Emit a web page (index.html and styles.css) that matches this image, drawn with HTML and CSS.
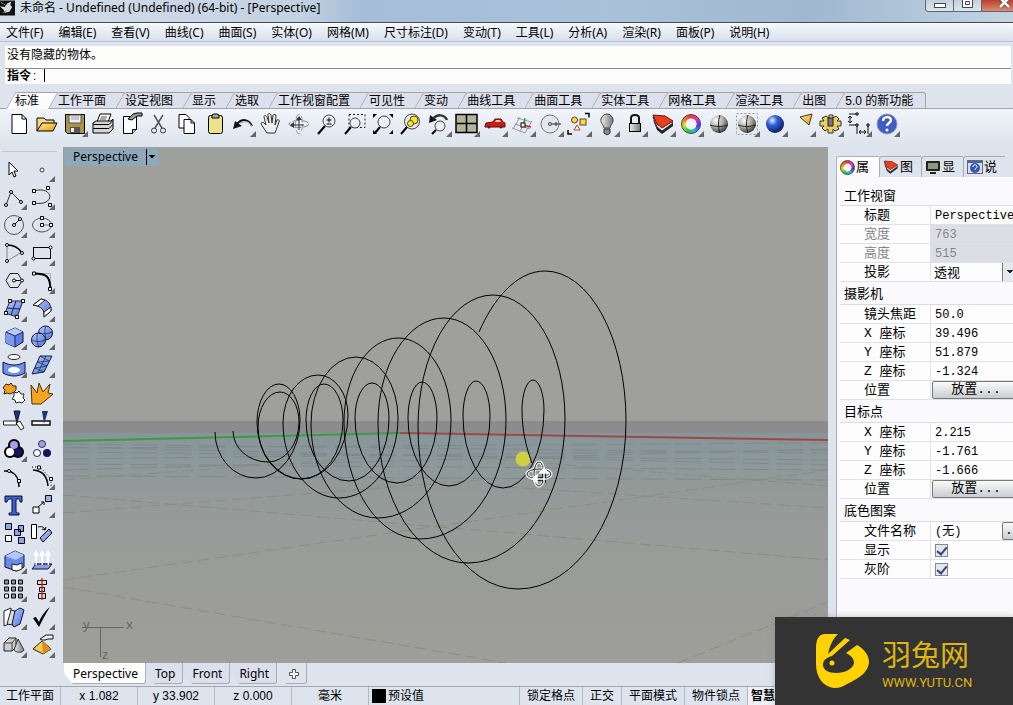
FILE: index.html
```html
<!DOCTYPE html>
<html lang="zh-CN">
<head>
<meta charset="UTF-8" />
<meta name="viewport" content="width=device-width, initial-scale=1" />
<title>未命名 - Undefined (Undefined) (64-bit) - [Perspective]</title>
<link rel="stylesheet" href="styles.css">
</head>
<body>

<svg class="defs" aria-hidden="true">
  <defs>
    <radialGradient id="ballGray" cx=".35" cy=".3" r=".8"><stop offset="0" stop-color="#fff"/><stop offset=".5" stop-color="#a8a89c"/><stop offset="1" stop-color="#222"/></radialGradient>
    <radialGradient id="ballBlue" cx=".35" cy=".3" r=".8"><stop offset="0" stop-color="#eef"/><stop offset=".35" stop-color="#2d62d8"/><stop offset="1" stop-color="#04104a"/></radialGradient>
    <linearGradient id="blue" x1="0" y1="0" x2="1" y2="1"><stop offset="0" stop-color="#b9ccff"/><stop offset="1" stop-color="#4d6fd6"/></linearGradient>
    <linearGradient id="gold" x1="0" y1="0" x2="1" y2="1"><stop offset="0" stop-color="#fff0a0"/><stop offset="1" stop-color="#e8980c"/></linearGradient>
    <linearGradient id="gray" x1="0" y1="0" x2="1" y2="0"><stop offset="0" stop-color="#eee"/><stop offset="1" stop-color="#777"/></linearGradient>
    <linearGradient id="ground" x1="0" y1="0" x2="0" y2="1">
      <stop offset="0" stop-color="#869699"/><stop offset=".15" stop-color="#8e9999"/><stop offset=".4" stop-color="#989b99"/><stop offset="1" stop-color="#9e9e9a"/>
    </linearGradient>
  </defs>
</svg>

<header class="titlebar">
  <svg class="app-icon" viewBox="0 0 16 16"><rect width="16" height="16" fill="#111"/><path d="M0 6l5 1 3-4 4-2-1 4 2 2-3 5-5 1-1-3z" fill="#ddd"/><path d="M1 2l5 3M3 13l4-2" stroke="#888"/></svg>
  <h1>未命名 - Undefined (Undefined) (64-bit) - [Perspective]</h1>
  <div class="win-buttons">
    <button aria-label="最小化"><svg viewBox="0 0 12 12"><rect x=".5" y="3.500" width="11" height="4" fill="#fff" stroke="#445"/></svg></button>
    <button aria-label="还原"><svg viewBox="0 0 12 12"><path d="M.5-1.500h10v9h-10zM3.500 1.500h4v3h-4z" fill="#fff" stroke="#445"/></svg></button>
    <button class="close" aria-label="关闭"><svg viewBox="0 0 12 12"><path d="M1-2l9 9M10-2l-9 9" stroke="#544" stroke-width="4"/><path d="M1-2l9 9M10-2l-9 9" stroke="#fff" stroke-width="2.500"/></svg></button>
  </div>
</header>

<nav class="menu">
  <button>文件(F)</button><button>编辑(E)</button><button>查看(V)</button><button>曲线(C)</button><button>曲面(S)</button><button>实体(O)</button><button>网格(M)</button><button>尺寸标注(D)</button><button>变动(T)</button><button>工具(L)</button><button>分析(A)</button><button>渲染(R)</button><button>面板(P)</button><button>说明(H)</button>
</nav>

<section class="command">
  <p>没有隐藏的物体。</p>
  <div class="prompt"><label for="cmd">指令</label><span>:</span><input id="cmd" type="text"></div>
</section>

<nav class="tool-tabs">
  <button class="active">标准</button><button>工作平面</button><button>设定视图</button><button>显示</button><button>选取</button><button>工作视窗配置</button><button>可见性</button><button>变动</button><button>曲线工具</button><button>曲面工具</button><button>实体工具</button><button>网格工具</button><button>渲染工具</button><button>出图</button><button>5.0 的新功能</button>
</nav>

<div class="toolbar">
  <button aria-label="新建"><svg viewBox="0 0 24 24"><path d="M5 2.500h10l4.500 4.500v14.500H5z" fill="#fff" stroke="#000"/><path d="M15 2.500V7h4.500" fill="none" stroke="#000"/></svg></button>
  <button aria-label="打开"><svg viewBox="0 0 24 24"><path d="M2 19V6h7l2 2h8v4" fill="#f3d98a" stroke="#000"/><path d="M2 19l5-8h15l-4 8z" fill="url(#gold)" stroke="#000"/></svg></button>
  <button class="more" aria-label="保存"><svg viewBox="0 0 24 24"><path d="M2.500 2.500h19v19h-17l-2-2z" fill="#aa9642" stroke="#000"/><path d="M6 3h12v8H6z" fill="#eef" stroke="#554"/><path d="M8 5h8M8 7h8" stroke="#99a"/><path d="M7 15h10v6H7z" fill="#555"/><path d="M8 16h3v4H8z" fill="#eee"/></svg></button>
  <button aria-label="打印"><svg viewBox="0 0 24 24"><path d="M6 10l3-8h11l-3 8" fill="#fff" stroke="#000"/><path d="M10 5h6M9 7h6" stroke="#555"/><path d="M2 11l3-2h15l2-2v10l-4 4H2z" fill="#d4d4d4" stroke="#000"/><path d="M2 12.500h16l4-4M2 16.500h16l4-4" fill="none" stroke="#000"/></svg></button>
  <button aria-label="文件属性"><svg viewBox="0 0 24 24"><path d="M4.500 4.500h13v13l-4 4h-9z" fill="#fff" stroke="#000"/><path d="M13.500 21.500v-4h4" fill="#ccc" stroke="#000"/><path d="M9 7l5-5 4-1h5v3h-5l-5 4z" fill="#999" stroke="#000"/></svg></button>
  <button aria-label="剪切"><svg viewBox="0 0 24 24"><path d="M7 3l8 13M16 3L8 16" stroke="#555" stroke-width="1.500"/><circle cx="7" cy="18.500" r="2.500" fill="none" stroke="#333"/><circle cx="16" cy="18.500" r="2.500" fill="none" stroke="#333"/></svg></button>
  <button aria-label="复制"><svg viewBox="0 0 24 24"><path d="M4 2.500h7l3 3V16H4z" fill="#fff" stroke="#000"/><path d="M9 7.500h7l3.500 3.500v10.500H9z" fill="#fff" stroke="#000"/><path d="M16 7.500V11h3.500" fill="none" stroke="#000"/></svg></button>
  <button aria-label="粘贴"><svg viewBox="0 0 24 24"><rect x="5.500" y="3.500" width="14" height="18" rx="2" fill="#ece28a" stroke="#000"/><path d="M9 6V3l2-1h3l2 1v3z" fill="#aaa" stroke="#000"/></svg></button>
  <button class="more" aria-label="撤销"><svg viewBox="0 0 24 24"><path d="M2 17l2-8 7 5z" fill="#111"/><path d="M6 12c5-6 12-5 15 2" fill="none" stroke="#111" stroke-width="2"/><path d="M9 11c5-2 8-2 12 3" fill="none" stroke="#999"/></svg></button>
  <button aria-label="平移"><svg viewBox="0 0 24 24"><path d="M8 21l-6-9c0-2 2-2 3-1l2 2-2-8c0-2 2-2 3 0l2 6-1-8c0-2 2-2 3 0l1 8 1-8c1-1 3-1 3 1l-1 9 2-5c1-1 3 0 2 2l-4 11z" fill="#eee" stroke="#333"/></svg></button>
  <button aria-label="旋转视图"><svg viewBox="0 0 24 24"><ellipse cx="12" cy="12" rx="10" ry="3.500" fill="none" stroke="#888" stroke-dasharray="7 2"/><ellipse cx="12" cy="12" rx="3.500" ry="10" fill="none" stroke="#999" stroke-dasharray="7 2"/><path d="M5 13h12M12 6v12" fill="none" stroke="#333"/><path d="M7 10v6l-4-3zM9 8h6l-3-4z" fill="#333"/></svg></button>
  <button aria-label="动态缩放"><svg viewBox="0 0 24 24"><circle cx="14" cy="9" r="6" fill="#eef" stroke="#444"/><path d="M10 14l-7 8" stroke="#000" stroke-width="2"/><path d="M11.500 8h5M14 5.500v5M11.500 12h5" stroke="#000"/></svg></button>
  <button aria-label="框选缩放"><svg viewBox="0 0 24 24"><rect x="6" y="2.500" width="16" height="13" fill="none" stroke="#222" stroke-dasharray="2 2"/><circle cx="12" cy="11" r="5" fill="#eef" stroke="#444"/><path d="M8 15l-6 7" stroke="#000" stroke-width="2"/></svg></button>
  <button aria-label="缩放至最大范围"><svg viewBox="0 0 24 24"><path d="M2 6V2h4zM18 2h4v4zM22 18v4h-4zM2 18v4h4z" fill="#000"/><circle cx="13" cy="10" r="6" fill="#eef" stroke="#444"/><path d="M9 15l-5 6" stroke="#000" stroke-width="2"/></svg></button>
  <button aria-label="缩放选取物体"><svg viewBox="0 0 24 24"><circle cx="13" cy="9.500" r="7.500" fill="#e9e9ee" stroke="#444"/><circle cx="15" cy="8" r="4" fill="#ffe629" stroke="#443"/><circle cx="11.500" cy="11.500" r="3" fill="#ffe629" stroke="#443"/><path d="M8 15l-6 7" stroke="#000" stroke-width="2"/></svg></button>
  <button class="more" aria-label="恢复视图"><svg viewBox="0 0 24 24"><path d="M2 11l1-8 7 5z" fill="#111"/><path d="M6 7c4-5 11-5 14 1" fill="none" stroke="#333" stroke-width="2.500"/><circle cx="13" cy="14" r="5" fill="#eee" stroke="#444"/><path d="M9 18l-4 4" stroke="#000" stroke-width="2"/></svg></button>
  <button class="more" aria-label="四视图"><svg viewBox="0 0 24 24"><rect x="1" y="2.500" width="21" height="18" fill="#b5b398" stroke="#000" stroke-width="1.500"/><path d="M11.500 2v19M1 11.500h21" stroke="#000" stroke-width="1.500"/></svg></button>
  <button class="more" aria-label="右视图"><svg viewBox="0 0 24 24"><path d="M2 14l1-3 7-1 2-3h6l2 3 2 1v4H2z" fill="#d01c10" stroke="#700"/><path d="M13 8h4l1 2h-6z" fill="#ecc"/><circle cx="6" cy="15" r="1.500" fill="#333"/><circle cx="18" cy="15" r="1.500" fill="#333"/></svg></button>
  <button class="more" aria-label="工作平面"><svg viewBox="0 0 24 24"><path d="M6 6l14 4M4 12l15 5M1 16l13 5M9 5L2 17M15 7L9 20M21 9l-7 12" stroke="#888" stroke-width=".8"/><path d="M12 13l8 2" stroke="#c22" stroke-width="1.500"/><path d="M12 13l2-7" stroke="#282"/><rect x="10" y="11" width="4" height="4" fill="#fff" stroke="#000"/></svg></button>
  <button class="more" aria-label="圆"><svg viewBox="0 0 24 24"><circle cx="11" cy="12" r="9" fill="#e3e6ea" stroke="#777"/><circle cx="11" cy="12" r="1.500" fill="#fff" stroke="#333"/><path d="M13 12h9M17 10v4" stroke="#222"/></svg></button>
  <button class="more" aria-label="选取"><svg viewBox="0 0 24 24"><path d="M18 1.500h4v4M1 18v4h4" fill="none" stroke="#000" stroke-width="1.500"/><circle cx="7.500" cy="8" r="3" fill="#ffd83b" stroke="#543"/><rect x="13" y="7" width="6" height="6" fill="#ffd83b" stroke="#543"/><path d="M10 13l3 5H7z" fill="#fff" stroke="#b42"/></svg></button>
  <button class="more" aria-label="隐藏物体"><svg viewBox="0 0 24 24"><path d="M9 16c0-3-4-5-3-9 1-3 3-5 6-5s5 2 6 5c1 4-3 6-3 9z" fill="url(#gray)" stroke="#444"/><path d="M9 17h6v4l-3 2-3-2z" fill="#888" stroke="#333"/></svg></button>
  <button class="more" aria-label="锁定物体"><svg viewBox="0 0 24 24"><path d="M8 12V6c0-4 8-4 8 0v6" fill="none" stroke="#111" stroke-width="2"/><rect x="6.500" y="11.500" width="11" height="8" fill="url(#gray)" stroke="#000"/></svg></button>
  <button class="more" aria-label="图层"><svg viewBox="0 0 24 24"><path d="M2 8l4 10 5 4 11-8v-4l-11 6z" fill="#222"/><path d="M2 5l4 10 5 4 11-8-3-2z" fill="#eee" stroke="#333"/><path d="M2 3l12 1 8 5-11 7-5-4z" fill="#e8411a" stroke="#612"/></svg></button>
  <button class="more" aria-label="物件属性"><span class="wheel"></span></button>
  <button aria-label="着色"><svg viewBox="0 0 24 24"><circle cx="12" cy="12" r="9" fill="url(#ballGray)"/><path d="M3 13c6 2 12 2 18 0M13 3c-2 6-2 12 0 18" fill="none" stroke="#222"/></svg></button>
  <button class="more" aria-label="渲染模式"><svg viewBox="0 0 24 24"><rect x="1.500" y="1.500" width="21" height="21" fill="none" stroke="#999" stroke-dasharray="2 2"/><circle cx="12" cy="12" r="9" fill="url(#ballGray)"/><path d="M3 13c6 2 12 2 18 0M13 3c-2 6-2 12 0 18" fill="none" stroke="#222"/></svg></button>
  <button class="more" aria-label="渲染"><svg viewBox="0 0 24 24"><circle cx="12" cy="12" r="9" fill="url(#ballBlue)"/></svg></button>
  <button class="more" aria-label="灯光"><svg viewBox="0 0 24 24"><path d="M9 5l12-3-3 11z" fill="url(#gold)" stroke="#432"/></svg></button>
  <button class="more" aria-label="选项"><svg viewBox="0 0 24 24"><path d="M10 3h4v3l3-2 3 3-2 2h4v5h-4l2 3-4 2-2-2v4H9v-4l-3 2-3-3 2-2H1V9h4L3 6l4-2 3 2z" fill="#ecce65" stroke="#332"/><rect x="9" y="6" width="5" height="8" fill="#777" stroke="#222"/></svg></button>
  <button class="more" aria-label="尺寸标注"><svg viewBox="0 0 24 24"><path d="M2 2h8M3 4v7M2 13h8M1 6l2-2 2 2M1 9l2 2 2-2M10 14v8M21 14v8M12 20h7M14 18l-2 2 2 2M17 18l2 2-2 2" fill="none" stroke="#111"/><path d="M9 1h2v2H9zM9 12h2v2H9zM20 12h2v2h-2z" fill="#fff" stroke="#000"/></svg></button>
  <button class="more" aria-label="说明"><svg viewBox="0 0 24 24"><circle cx="12" cy="12" r="10" fill="#3d5fc4" stroke="#99b"/><path d="M8 9c0-5 8-5 8-1 0 3-4 3-4 6" fill="none" stroke="#fff" stroke-width="2.500"/><circle cx="12" cy="18" r="1.500" fill="#fff"/></svg></button>
</div>

<main>
  <aside class="tools">
    <button aria-label="选取"><svg viewBox="0 0 24 24"><path d="M7 5v13l3-3 2 5 2-1-2-5h4z" fill="#fff" stroke="#000"/></svg></button>
    <button class="more" aria-label="点"><svg viewBox="0 0 24 24"><circle cx="12" cy="13" r="2" fill="#fff" stroke="#243"/></svg></button>
    <button class="more" aria-label="多重直线"><svg viewBox="0 0 24 24"><path d="M4 20L9 7l10 10" fill="none" stroke="#333"/><g fill="#fff" stroke="#000"><circle cx="4" cy="20" r="1.500"/><circle cx="9" cy="7" r="1.500"/><circle cx="19" cy="17" r="1.500"/></g></svg></button>
    <button class="more" aria-label="控制点曲线"><svg viewBox="0 0 24 24"><path d="M4 6c20-6 22 16 0 12" fill="none" stroke="#333"/><g fill="#fff" stroke="#000"><path d="M2.500 4.500h3v3h-3zM16.500 1.500h3v3h-3zM2.500 16.500h3v3h-3zM18.500 18.500h3v3h-3z"/></g></svg></button>
    <button class="more" aria-label="圆"><svg viewBox="0 0 24 24"><circle cx="12" cy="12" r="9.500" fill="none" stroke="#555"/><path d="M12 12l6-6" stroke="#000"/><circle cx="12" cy="12" r="1.500" fill="#fff" stroke="#000"/><circle cx="18" cy="6" r="1.500" fill="#fff" stroke="#000"/></svg></button>
    <button class="more" aria-label="椭圆"><svg viewBox="0 0 24 24"><ellipse cx="12" cy="12" rx="9.500" ry="7" fill="none" stroke="#555"/><path d="M12 12h9" stroke="#777"/><path d="M10.500 10.500h3v3h-3zM10.500 3.500h3v3h-3zM19.500 10.500h3v3h-3z" fill="#fff" stroke="#000"/></svg></button>
    <button class="more" aria-label="圆弧"><svg viewBox="0 0 24 24"><path d="M5 20V4M5 20l15-9" stroke="#888"/><path d="M5 4c8 0 12 3 15 8" fill="none" stroke="#000" stroke-width="1.500"/><g fill="#fff" stroke="#000"><circle cx="5" cy="4" r="1.500"/><circle cx="5" cy="20" r="1.500"/><circle cx="20" cy="12" r="1.500"/></g></svg></button>
    <button class="more" aria-label="矩形"><svg viewBox="0 0 24 24"><rect x="3.500" y="6.500" width="17" height="11" fill="none" stroke="#000"/><circle cx="3.500" cy="17.500" r="1.500" fill="#fff" stroke="#000"/><circle cx="20.500" cy="6.500" r="1.500" fill="#fff" stroke="#000"/></svg></button>
    <button class="more" aria-label="多边形"><svg viewBox="0 0 24 24"><path d="M4 11.500l4-7h8l4 7-4 7H8z" fill="none" stroke="#222"/><path d="M12 11.500h8" stroke="#000"/><circle cx="12" cy="11.500" r="1.500" fill="#fff" stroke="#000"/><circle cx="20" cy="11.500" r="1.500" fill="#fff" stroke="#000"/></svg></button>
    <button class="more" aria-label="曲线圆角"><svg viewBox="0 0 24 24"><path d="M4 4.500h16.500V20" fill="none" stroke="#9b9"/><path d="M4 4.500c12 0 16 2 16.500 16" fill="none" stroke="#000" stroke-width="2"/><path d="M2.500 3h3v3h-3zM18.500 18.500h3v3h-3z" fill="#fff" stroke="#000"/></svg></button>
    <button class="more" aria-label="曲面"><svg viewBox="0 0 24 24"><path d="M8 4h13l-6 16-12-4z" fill="url(#blue)" stroke="#224"/><path d="M14 4l-5 14M5 11l13 1" stroke="#224"/><path d="M6.500 2.500h3v3h-3zM19.500 2.500h3v3h-3zM2.500 14.500h3v3h-3zM13.500 18.500h3v3h-3z" fill="#fff" stroke="#000"/></svg></button>
    <button class="more" aria-label="曲面工具"><svg viewBox="0 0 24 24"><path d="M3 8l8-6c8 1 10 6 10 12l-7 6c1-7-3-11-11-12z" fill="url(#blue)" stroke="#222"/><path d="M3 8l8-6 4 1-7 6zM14 20l7-6v-4l-7 5z" fill="#fff" stroke="#222"/></svg></button>
    <button class="more" aria-label="立方体"><svg viewBox="0 0 24 24"><path d="M4 7l9-4 8 4v10l-8 5-9-4z" fill="#5b7fe6" stroke="#113"/><path d="M4 7l9-4 8 4-8 4z" fill="#b7caff"/><path d="M4 7l9 4v11l-9-4z" fill="#7c9bf0"/><path d="M4 7l9 4 8-4M13 11v11" fill="none" stroke="#225"/></svg></button>
    <button class="more" aria-label="布尔运算"><svg viewBox="0 0 24 24"><circle cx="15.500" cy="8" r="7" fill="url(#blue)" stroke="#113"/><circle cx="8.500" cy="15" r="7" fill="url(#blue)" stroke="#113"/><path d="M2 15c4 2 9 2 13 0M8 8c-2 4-1 10 1 14M9 8c4 1 9 1 13-1M16 1c-2 4-1 9 0 13" fill="none" stroke="#124" stroke-width=".7"/></svg></button>
    <button class="more" aria-label="投影曲线"><svg viewBox="0 0 24 24"><ellipse cx="12" cy="4" rx="6" ry="2.500" fill="#fff" stroke="#222"/><path d="M1 9c7 4 15 4 22 0v11c-7 4-15 4-22 0z" fill="#6f90ea" stroke="#113"/><ellipse cx="12" cy="17" rx="6" ry="3" fill="#fff"/></svg></button>
    <button class="more" aria-label="网格"><svg viewBox="0 0 24 24"><path d="M10 3l12 0-8 16-12 2z" fill="url(#blue)" stroke="#124"/><path d="M16 3L8 20M7 9l12-1M5 15l12-2M10 3l9 5M7 9l10 4M5 15l9 4" stroke="#124" stroke-width=".7"/></svg></button>
    <button aria-label="组合"><svg viewBox="0 0 24 24"><path d="M4 3l3 1 2-2 2 3h3v4l-2 2-4 2-3-1-3 1 1-4-2-2z" fill="#f2a01e" stroke="#321"/><path d="M12 11l3 1 2-2 2 3h3l-1 4 2 2-3 3-3-1-3 1-1-3-3-1 2-3z" fill="#fff" stroke="#222"/></svg></button>
    <button aria-label="炸开"><svg viewBox="0 0 24 24"><path d="M1 4l6 8 2-10 4 9 7-8-2 9 5 1-7 6-5 4H2z" fill="#f6a51c" stroke="#431"/></svg></button>
    <button aria-label="修剪"><svg viewBox="0 0 24 24"><path d="M12 2h6l-3 12z" fill="#23337a" stroke="#113"/><path d="M1.500 12h13v4h-13zM14 14l4-2 4 7-3 2z" fill="#fff" stroke="#222"/></svg></button>
    <button aria-label="分割"><svg viewBox="0 0 24 24"><path d="M2 12h18v4H2z" fill="#fff" stroke="#111" stroke-width="1.500"/><path d="M12 2h6l-4 13z" fill="#23337a"/></svg></button>
    <button class="more" aria-label="群组"><svg viewBox="0 0 24 24"><g fill="#000"><circle cx="12" cy="8" r="6"/><circle cx="8" cy="15" r="6"/><circle cx="16" cy="15" r="6"/></g><circle cx="12" cy="8" r="4" fill="#a79bea"/><circle cx="16" cy="15" r="4" fill="#15155e"/><circle cx="8" cy="15" r="4" fill="#fff"/></svg></button>
    <button aria-label="取消群组"><svg viewBox="0 0 24 24"><circle cx="12" cy="7" r="3.500" fill="#a79bea" stroke="#335"/><circle cx="7" cy="16" r="3.500" fill="#fff" stroke="#224"/><circle cx="17" cy="16" r="4" fill="#15155e"/></svg></button>
    <button aria-label="编辑点"><svg viewBox="0 0 24 24"><path d="M2 6c10-1 15 6 15 16" fill="none" stroke="#000" stroke-width="1.500"/><circle cx="7" cy="6" r="1.500" fill="#fff" stroke="#000"/><path d="M15.500 14.500h3v3h-3z" fill="#fff" stroke="#000"/></svg></button>
    <button class="more" aria-label="控制点"><svg viewBox="0 0 24 24"><path d="M3 5c10 1 14 6 15 16" fill="none" stroke="#000" stroke-width="1.500"/><path d="M2 2h8l11 12v7" fill="none" stroke="#000" stroke-dasharray="1 2"/><path d="M7.500 1h3v3h-3zM19.500 12.500h3v3h-3z" fill="#fff" stroke="#000"/></svg></button>
    <button aria-label="文字"><svg viewBox="0 0 24 24"><path d="M3 3h17v6h-2c0-3-1-3-4-3v11c0 3 1 3 3 3v2H7v-2c2 0 3 0 3-3V6C7 6 6 6 5 9H3z" fill="#3d5fd0" stroke="#113"/></svg></button>
    <button class="more" aria-label="移动"><svg viewBox="0 0 24 24"><path d="M3 14h6v6H3z" fill="#fff" stroke="#000"/><path d="M15.500 2.500h6v6h-6z" fill="#9bb0f0" stroke="#000"/><path d="M8 14l6-5M11 9h3v3" fill="none" stroke="#000"/></svg></button>
    <button aria-label="复制"><svg viewBox="0 0 24 24"><path d="M3.500 2.500h6v6h-6zM16.500 4.500h5v6h-5zM12.500 8.500h6v6h-6zM16.500 16.500h6v6h-6z" fill="#8fa6ec" stroke="#000"/><path d="M3.500 14.500h6v6h-6z" fill="#fff" stroke="#000"/></svg></button>
    <button aria-label="旋转"><svg viewBox="0 0 24 24"><path d="M1.500 3.500h5v14h-5z" fill="#fff" stroke="#000"/><path d="M10 17L19 8l3 4-9 9z" fill="#8fa6ec" stroke="#000"/><path d="M8 6c4-1 6 0 7 3M12 8l3 1 1-3" fill="none" stroke="#000"/></svg></button>
    <button class="more" aria-label="实体编辑"><svg viewBox="0 0 24 24"><path d="M3 7l10-5 9 4v12l-8 4-11-4z" fill="#6a8aea" stroke="#113"/><path d="M3 7l10-5 9 4-8 5z" fill="#b4c6ff"/><path d="M10 15l5 1 5-2v6l-5 2-5-1z" fill="#fff" stroke="#222"/></svg></button>
    <button class="more" aria-label="设定高度"><svg viewBox="0 0 24 24"><path d="M2 20l4-5h16l-4 5z" fill="#88a0ec" stroke="#113"/><path d="M6 16V5M12 16V5M18 16V5M4 7l2-4 2 4M10 7l2-4 2 4M16 7l2-4 2 4" fill="none" stroke="#fff" stroke-width="2"/><path d="M4 15h17" stroke="#225" stroke-dasharray="2 1"/></svg></button>
    <button class="more" aria-label="阵列"><svg viewBox="0 0 24 24"><path d="M2.500 3h4v4h-4zM9.500 3h4v4h-4zM16.500 3h4v4h-4zM2.500 10h4v4h-4zM9.500 10h4v4h-4zM16.500 10h4v4h-4zM9.500 17h4v4h-4zM16.500 17h4v4h-4z" fill="#8c96b8" stroke="#000"/><path d="M2.500 17h4v4h-4z" fill="#fff" stroke="#000"/></svg></button>
    <button class="more" aria-label="对齐"><svg viewBox="0 0 24 24"><path d="M7.500 3.500h9v4h-9zM9.500 10.500h5v4h-5zM8.500 16.500h7v5h-7z" fill="#ddd" stroke="#000"/><path d="M12 1v22" stroke="#d22" stroke-width="1.500"/></svg></button>
    <button class="more" aria-label="变形"><svg viewBox="0 0 24 24"><path d="M2 6l7-3v15l-7 3z" fill="#fff" stroke="#222"/><path d="M9 5l4 1-2 14-6-1z" fill="#ddd" stroke="#222"/><path d="M13 6l5-3 4 2-4 14-6 3-2-3z" fill="url(#blue)" stroke="#113"/></svg></button>
    <button class="more" aria-label="检查"><svg viewBox="0 0 24 24"><path d="M3 13l3-1 3 5C12 10 15 6 20 2 16 8 13 14 9 22z" fill="#000"/></svg></button>
    <button class="more" aria-label="显示物体"><svg viewBox="0 0 24 24"><path d="M2 10l5-5h7v9l-4 4H2z" fill="#ccc" stroke="#222"/><path d="M2 10h8l4-5M10 10v8" fill="none" stroke="#444"/><path d="M16 6l6 11c-1 3-8 3-10 0z" fill="url(#gray)" stroke="#333"/></svg></button>
    <button class="more" aria-label="实体"><svg viewBox="0 0 24 24"><path d="M3 16l9-8 9 8-8 5z" fill="#f7c95a" stroke="#321"/><path d="M12 8l9 8-8 5z" fill="#df8f1a"/><path d="M10 6l6-4h7v4h-5l-3 1h-3z" fill="#eee" stroke="#111"/></svg></button>
  </aside>

  <section class="view">
    <div class="viewport">
      <svg class="scene" viewBox="63 147 765 516" preserveAspectRatio="xMidYMid slice">
        <rect x="-400" y="-100" width="1700" height="521" fill="#9f9f9b"/>
        <rect x="-400" y="431" width="1700" height="232" fill="url(#ground)"/>
        <rect x="-400" y="421" width="1700" height="12" fill="#8c8c8d"/>
        <g class="far-grid">
          <path d="M63 448l765-5M63 452l765 8M63 459l765-9M63 464l765 6M63 447l765 18M63 470l765-21M63 476l765 4M63 444l765 9"/>
        </g>
        <g class="near-grid">
          <path d="M63 495L828 560M63 580L828 470M63 587L506 663M63 513L506 478M678 663L828 602M506 487L828 508M63 480L400 455M480 458L828 486"/>
        </g>
        <path d="M63 441L400 433" stroke="#3d9a45" stroke-width="2"/>
        <path d="M400 433L828 440" stroke="#a04848" stroke-width="2"/>
        <circle cx="523" cy="459" r="7.500" fill="#cfcf40"/>
        <!-- outer helix, growing towards the camera -->
        <path class="curve" d="M479 332C492 302 515 271 545 271A81 150 0 0 1 626 421A108 168 0 0 1 518 589A100 162 0 0 1 418 427A75 132 0 0 1 493 295A72 124 0 0 1 565 419A97 144 0 0 1 468 563A90 140 0 0 1 378 423A66 105 0 0 1 444 318A62 102 0 0 1 506 420A86 119 0 0 1 420 539A76 117 0 0 1 344 422A54 84 0 0 1 398 338A53 82 0 0 1 451 420A73 98 0 0 1 378 518A67 94 0 0 1 311 424A45 67 0 0 1 356 357A42 61 0 0 1 398 418A59 80 0 0 1 339 498A56 75 0 0 1 283 423A35 48 0 0 1 318 375A30 40 0 0 1 348 415A47 64 0 0 1 301 479A43 52 0 0 1 258 427A22 35 0 0 1 280 392A19 30 0 0 1 299 422A31 40 0 0 1 268 462A35 31 0 0 1 233 431"/>
        <!-- inner helix -->
        <path class="curve" d="M532 463C526 447 522 430 522 410A11 30 0 0 1 533 380A11 30 0 0 1 544 410A41 78 0 0 1 503 488A40 72 0 0 1 463 416A13 35 0 0 1 476 381A14 35 0 0 1 490 416A41 70 0 0 1 449 486A41 68 0 0 1 408 418A14 36 0 0 1 422 382A15 36 0 0 1 437 418A40 65 0 0 1 397 483A42 65 0 0 1 355 418A17 35 0 0 1 372 383A17 35 0 0 1 389 418A40 63 0 0 1 349 481A43 61 0 0 1 306 420A18 36 0 0 1 324 384A19 36 0 0 1 343 420A41 59 0 0 1 302 479A45 57 0 0 1 257 422A22 38 0 0 1 279 384A21 36 0 0 1 300 420A44 58 0 0 1 256 478A41 46 0 0 1 215 432"/>
        <g fill="none" stroke="#fff" stroke-width="3"><ellipse cx="539" cy="474" rx="12" ry="5"/><ellipse cx="539" cy="474" rx="5" ry="12"/></g>
        <g fill="none" stroke="#222"><ellipse cx="539" cy="474" rx="12" ry="5"/><ellipse cx="539" cy="474" rx="5" ry="12"/></g>
        <path d="M544 468v15M532 479h14" stroke="#222" stroke-width="4"/>
        <path d="M544 469v14M533 479h13M540 473l4-5 4 5zM537 475l-5 4 5 4z" fill="#fff" stroke="#fff" stroke-width="1.500"/>
        <path d="M82 627.500H124M100.500 627V657" stroke="#666" fill="none"/>
        <g class="axis-text"><text x="83" y="629">y</text><text x="126" y="629">x</text><text x="102" y="659">z</text></g>
      </svg>
      <button class="view-label"><span>Perspective</span><i></i></button>
    </div>
    <nav class="view-tabs">
      <button class="active">Perspective</button><button>Top</button><button>Front</button><button>Right</button><button class="add" aria-label="新增"><svg viewBox="0 0 10 10"><path d="M3.500.5h3v3h3v3h-3v3h-3v-3h-3v-3h3z" fill="#fff" stroke="#555"/></svg></button>
    </nav>
  </section>

  <aside class="panel">
    <nav class="panel-tabs">
      <button class="active"><span class="wheel small"></span>属</button>
      <button><svg viewBox="0 0 24 24"><path d="M2 8l4 10 5 4 11-8v-4l-11 6z" fill="#222"/><path d="M2 5l4 10 5 4 11-8-3-2z" fill="#eee" stroke="#333"/><path d="M2 3l12 1 8 5-11 7-5-4z" fill="#e8411a" stroke="#612"/></svg>图</button>
      <button><svg viewBox="0 0 16 16"><rect x="1" y="2" width="14" height="10" rx="1" fill="#222"/><rect x="3" y="4" width="10" height="6" fill="#8c9a7c"/><path d="M5 14h6" stroke="#222" stroke-width="2"/></svg>显</button>
      <button><svg viewBox="0 0 16 16"><rect x=".5" y="1.500" width="15" height="13" fill="#dde" stroke="#667"/><path d="M1 3h14" stroke="#46a" stroke-width="2"/><circle cx="8" cy="9" r="5" fill="#3558b8"/><path d="M6 8c0-3 4-3 4 0 0 1-2 1-2 3" fill="none" stroke="#fff"/></svg>说</button>
    </nav>
    <div class="props">
      <h2>工作视窗</h2>
      <div class="row"><label for="p-title">标题</label><input id="p-title" value="Perspective"></div>
      <div class="row off"><label for="p-w">宽度</label><input id="p-w" value="763" disabled></div>
      <div class="row off"><label for="p-h">高度</label><input id="p-h" value="515" disabled></div>
      <div class="row"><label for="p-proj">投影</label><select id="p-proj"><option>透视</option></select></div>
      <h2>摄影机</h2>
      <div class="row"><label for="c-lens">镜头焦距</label><input id="c-lens" value="50.0"></div>
      <div class="row"><label for="c-x">X 座标</label><input id="c-x" value="39.496"></div>
      <div class="row"><label for="c-y">Y 座标</label><input id="c-y" value="51.879"></div>
      <div class="row"><label for="c-z">Z 座标</label><input id="c-z" value="-1.324"></div>
      <div class="row"><label for="c-place">位置</label><button id="c-place">放置...</button></div>
      <h2>目标点</h2>
      <div class="row"><label for="t-x">X 座标</label><input id="t-x" value="2.215"></div>
      <div class="row"><label for="t-y">Y 座标</label><input id="t-y" value="-1.761"></div>
      <div class="row"><label for="t-z">Z 座标</label><input id="t-z" value="-1.666"></div>
      <div class="row"><label for="t-place">位置</label><button id="t-place">放置...</button></div>
      <h2>底色图案</h2>
      <div class="row"><label for="b-file">文件名称</label><input id="b-file" value="(无)"><button class="browse" aria-label="浏览">.</button></div>
      <div class="row"><label for="b-show">显示</label><input id="b-show" type="checkbox" checked></div>
      <div class="row"><label for="b-gray">灰阶</label><input id="b-gray" type="checkbox" checked></div>
    </div>
  </aside>
</main>

<footer class="status">
  <button class="plane">工作平面</button>
  <span class="coord">x 1.082</span>
  <span class="coord">y 33.902</span>
  <span class="coord">z 0.000</span>
  <span class="coord">毫米</span>
  <button class="layer"><i></i>预设值</button>
  <button>锁定格点</button><button>正交</button><button>平面模式</button><button>物件锁点</button><button class="on">智慧</button>
</footer>

<div class="watermark">
  <svg viewBox="0 0 54 56"><path d="M10 1h13C17 7 15 13 13 21L30 5l5 2-18 16c-7 2-9 5-9 9 0 5 6 8 13 8 9 0 17-4 18-10 0-4-2-7-8-10l11-8c7 4 11 9 12 16 0 12-12 18-20 22-5 3-9 5-15 5C9 54 1 45 1 31V15C1 6 4 1 10 1z" fill="#ffd200"/><circle cx="17" cy="30" r="2.500" fill="#ffd200"/></svg>
  <div><strong>羽兔网</strong><small>WWW.YUTU.CN</small></div>
</div>

</body>
</html>
```
FILE: styles.css
```css
* { box-sizing: border-box; }
body { margin: 0; height: 100vh; display: flex; flex-direction: column; overflow: hidden; position: relative; background: #dde4ed; color: #000; font: 12px/16px "Liberation Sans", "Noto Sans CJK SC", sans-serif; }
button, input, select { font: inherit; color: inherit; margin: 0; padding: 0; border: 0; background: none; white-space: nowrap; }
h1, h2, p { margin: 0; font-weight: normal; }
.defs { position: absolute; width: 0; height: 0; }

.titlebar { flex: none; height: 23px; display: flex; border-bottom: 1px solid #444c55; background: linear-gradient(90deg, #d3deea 0, #c3d2e2 300px, #a5bdd6 360px, #a9c2da 60%, #9fb8d0 80%, #c3d3e2 100%); }
.titlebar h1 { flex: 1; font: 12px/16px "Noto Sans", "Noto Sans CJK SC", sans-serif; padding-left: 5px; }
.app-icon { width: 15px; height: 16px; }
.win-buttons { display: flex; height: 12px; border: 1px solid #5a6673; border-width: 0 0 1px 1px; border-radius: 0 0 0 4px; overflow: hidden; }
.win-buttons button { width: 28px; display: flex; justify-content: center; border-right: 1px solid #5a6673; background: linear-gradient(#c3cfda, #dde6ee); }
.win-buttons svg { width: 12px; height: 12px; }
.win-buttons .close { width: 31px; padding-left: 14px; border: 0; background: linear-gradient(#b7402c, #e08a70); }

.menu { flex: none; height: 19px; display: flex; background: linear-gradient(#f6f9fc, #d7e0ec); border-bottom: 1px solid #b9c2d2; }
.menu button { padding: 1px 8px 0 7px; font-family: "Noto Sans", "Noto Sans CJK SC", sans-serif; }
.menu button:first-child { padding-left: 6px; }

.command { flex: none; margin: 4px 2px 0 5px; background: #fdfdfb; }
.command p { height: 23px; padding: 0 2px; line-height: 18px; border-bottom: 1px solid #8b8f96; }
.prompt { display: flex; height: 15px; line-height: 14px; padding-left: 2px; }
.prompt label { font-weight: bold; }
.prompt span { width: 13px; padding-left: 2px; }
.prompt input { flex: 1; border-left: 1px solid #000; height: 13px; outline: 0; }

.tool-tabs { flex: none; height: 17px; margin-top: 8px; padding-left: 6px; display: flex; border-bottom: 1px solid #a0a4a8; }
.tool-tabs button { position: relative; z-index: 0; height: 17px; padding: 0 9px 0 10px; line-height: 16px; }
.tool-tabs button::before { content: ""; position: absolute; z-index: -1; inset: 0 -1px 0 0; border: 1px solid #a0a4a8; border-right: 0; border-radius: 3px 0 0 0; background: #dcdfec; transform: skewX(-28deg); transform-origin: 0 100%; }
.tool-tabs button:last-child::before { right: 8px; }
.tool-tabs button:last-child::after { content: ""; position: absolute; z-index: -1; inset: 0 -4px 0 auto; width: 19px; border: 1px solid #a0a4a8; border-left: 0; border-radius: 0 3px 0 0; background: #dcdfec; }
.tool-tabs .active { padding-left: 9px; }
.tool-tabs .active::before { background: #fcfcfc; border-bottom-color: #fcfcfc; }

.toolbar { flex: none; height: 36px; padding: 1px 0 0 5px; display: flex; background: linear-gradient(#f2f5fa, #dde4ed); }
.toolbar button, .tools button { flex: none; position: relative; width: 28px; height: 28px; display: grid; place-items: center; }
.toolbar svg, .tools svg { width: 24px; height: 24px; overflow: visible; }
.more::after { content: ""; position: absolute; right: 1px; bottom: 1px; border: 3px solid; border-color: transparent #666 #666 transparent; }
.wheel { width: 20px; height: 20px; border-radius: 50%; border: 1px solid #444; background: radial-gradient(#f4f4f8 42%, transparent 46%), conic-gradient(#e33, #d3c, #53e, #2bd, #2c3, #dd2, #e72, #e33); }
.wheel.small { width: 15px; height: 15px; }

main { flex: 1; min-height: 0; display: flex; }
.tools { flex: none; width: 63px; padding: 10px 7px 0 0; display: grid; grid-template-columns: 28px 28px; grid-auto-rows: 28px; align-content: start; background: linear-gradient(#c9c9bb, #c9c9bb) 2px 6px / 55px 1px no-repeat; }

.view { flex: 1; min-width: 0; padding-top: 2px; display: flex; flex-direction: column; }
.viewport { flex: 1; min-height: 0; position: relative; background: #9f9f9b; overflow: hidden; }
.scene { display: block; width: 100%; height: 100%; }
.curve { fill: none; stroke: #000; }
.far-grid { fill: none; stroke: #7f8992; stroke-dasharray: 26 8; }
.near-grid { fill: none; stroke: #8e8d7a; stroke-dasharray: 12 5; }
.axis-text { font: 13px "Noto Sans", sans-serif; fill: #666; }
.view-label { position: absolute; left: 2px; top: 1px; height: 18px; padding-left: 8px; display: flex; align-items: center; background: #8fa9b8; font-family: "Noto Sans", sans-serif; }
.view-label i { margin-left: 8px; width: 12px; height: 16px; border-left: 1px solid #000; background: conic-gradient(from -45deg at 50% 70%, #000 90deg, transparent 0) 1px 6px / 8px 5px no-repeat; }
.view-tabs { flex: none; height: 23px; padding-left: 1px; display: flex; }
.view-tabs button { position: relative; height: 21px; padding: 0 7px 0 9px; font-family: "Noto Sans", sans-serif; line-height: 22px; background: #dcdfec; border: 1px solid #aab; border-width: 0 1px 1px 0; border-radius: 0 0 3px 0; clip-path: polygon(0 0, 100% 0, 100% 100%, 9px 100%, 0 50%); }
.view-tabs .active { background: #fdfdfd; }
.view-tabs .add { width: 30px; padding: 5px 0 0 12px; background: none; display: flex; }
.add svg { width: 10px; height: 10px; margin-top: 1px; }

.panel { flex: none; width: 185px; padding: 11px 0 0 8px; display: flex; flex-direction: column; overflow: hidden; }
.panel-tabs { flex: none; height: 21px; display: flex; border-left: 1px solid #abb; }
.panel-tabs button { position: relative; flex: none; width: 42px; display: flex; align-items: center; gap: 1px; padding-left: 3px; font-size: 13px; border-top: 1px solid #a9adb2; border-radius: 3px 0 0 0; }
.panel-tabs button + button { border-left: 1px solid #a9adb2; }
.panel-tabs .active { background: #fcfcfc; }
.panel-tabs svg { width: 16px; height: 16px; flex: none; }
.props { flex: 1; padding: 7px 0 0 3px; width: 190px; background: #fafafc; border-left: 1px solid #a9adb2; font-size: 13px; line-height: 20px; }
.props h2 { height: 23px; padding-left: 4px; font-size: 13px; line-height: 23px; border-bottom: 1px solid #d9dbe6; }
.props h2:first-child { height: 22px; }
.row { height: 19px; padding-left: 24px; display: flex; border-bottom: 1px solid #e0e1ea; background: #fdfdfd; }
.row label { flex: none; width: 67px; border-right: 1px solid #e0e1ea; font-family: "Liberation Mono", "Noto Sans CJK SC", monospace; }
.row input { flex: 1; min-width: 0; padding: 2px 0 0 4px; font: 12px/16px "Liberation Mono", "Noto Sans CJK SC", monospace; }
.row.off { color: #85858a; }
.row.off input { background: #dcdee6; }
.row select { width: 87px; padding: 1px 0 0 3px; appearance: none; line-height: 17px; background: conic-gradient(from -45deg at 50% 70%, #222 90deg, transparent 0) 75px 7px / 8px 5px no-repeat, linear-gradient(90deg, #777 1px, #e6e8ef 1px) 71px 0 / 16px 18px no-repeat; }
.row button { width: 88px; height: 18px; margin-left: 1px; border: 1px solid #77796c; border-radius: 2px; background: linear-gradient(#fbfbfb, #c9ccd2); font: 13px/16px "Liberation Mono", "Noto Sans CJK SC", monospace; }
.row .browse { flex: none; width: 24px; text-align: left; padding-left: 2px; }
.row input[type=checkbox] { flex: none; appearance: none; width: 13px; height: 13px; margin: 3px 0 0 4px; padding: 0; border: 1px solid #85898f; background: #e4e6ee; position: relative; }
.row input[type=checkbox]:checked::after { content: ""; position: absolute; left: 3px; top: 0; width: 4px; height: 8px; border: solid #33457f; border-width: 0 2px 2px 0; transform: rotate(40deg); }

.status { flex: none; height: 19px; display: flex; border-top: 1px solid #a4a8ae; line-height: 18px; }
.status > * { flex: none; border-right: 1px solid #b3b7be; padding: 0 7px; }
.status .plane { width: 61px; padding: 0 6px; }
.status .coord { width: 77px; text-align: center; }
.status .layer { flex: 1; max-width: 151px; padding: 0 3px; display: flex; align-items: center; gap: 2px; }
.layer i { width: 14px; height: 14px; background: #000; }
.status .on { font-weight: bold; background: #eef1f7; border: 0; padding: 0 3px; }

.watermark { position: absolute; right: 0; bottom: 0; width: 238px; height: 88px; padding: 0 0 0 40px; display: flex; align-items: center; gap: 13px; background: #333; color: #deb510; box-shadow: 0 0 6px #8888; }
.watermark svg { width: 54px; height: 56px; }
.watermark div { display: grid; }
.watermark strong { font: 29px/43px "Noto Sans CJK SC", sans-serif; }
.watermark small { font: 13px/15px Roboto, sans-serif; }
```
